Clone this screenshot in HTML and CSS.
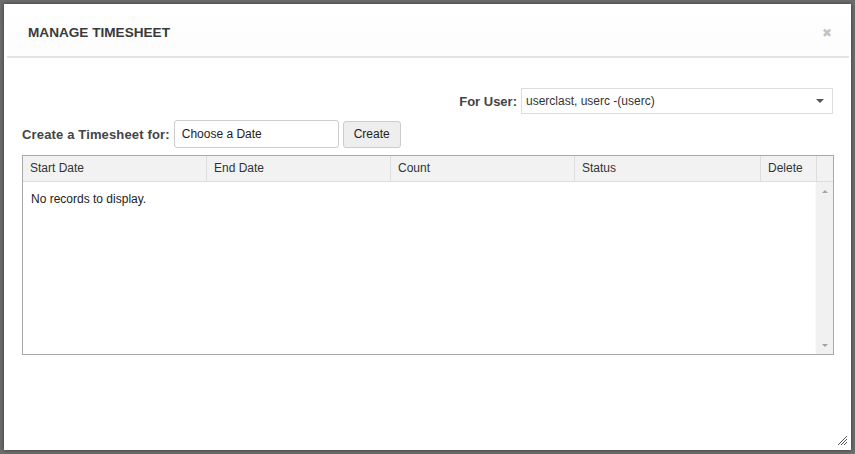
FILE: index.html
```html
<!DOCTYPE html>
<html>
<head>
    <title>Manage Timesheet</title>
    <link rel="stylesheet" href="styles.css">
</head>
<body>
    <!-- the dialog window -->
    <div class="dialog">
        <div class="dialog-header">
            <span class="dialog-title">MANAGE TIMESHEET</span>
            <span class="dialog-close">&#x2716;</span>
        </div>

        <div class="dialog-body">
            <div class="user-row">
                <label class="field-label">For User:</label>
                <div class="select">
                    <span>userclast, userc -(userc)</span>
                    <span class="select-arrow"></span>
                </div>
            </div>

            <div class="create-row">
                <label class="field-label create-label">Create a Timesheet for:</label>
                <div class="date-input">Choose a Date</div>
                <button class="btn">Create</button>
            </div>

            <!-- the timesheet grid -->
            <div class="grid">
                <div class="grid-head">
                    <div class="col col-wide">Start Date</div>
                    <div class="col col-wide">End Date</div>
                    <div class="col col-wide">Count</div>
                    <div class="col col-status">Status</div>
                    <div class="col col-del">Delete</div>
                    <div class="col col-gap"></div>
                </div>
                <div class="grid-body">
                    <div class="grid-empty">No records to display.</div>
                    <div class="scrollbar">
                        <span class="arrow-up"></span>
                        <span class="arrow-down"></span>
                    </div>
                </div>
            </div>
        </div>

        <svg class="resize" width="11" height="11" viewBox="0 0 11 11">
            <path d="M1 10 L10 1 M4 10 L10 4 M7 10 L10 7" stroke="#555" stroke-width="1" fill="none"/>
        </svg>
    </div>
</body>
</html>
```

FILE: styles.css
```css
/* page behind the dialog */
body {
    margin: 0;
    padding: 4px;
    background: #6d6d6d;
    font-family: "Liberation Sans", Arial, sans-serif;
    font-size: 12px;
    color: #333;
}

/* the dialog box */
.dialog {
    position: relative;
    box-sizing: border-box;
    width: 847px;
    height: 446px;
    background: #fff;
    box-shadow: 0 0 4px rgba(0, 0, 0, 0.5);
}

.dialog-header {
    display: flex;
    justify-content: space-between;
    align-items: center;
    height: 52px;
    margin: 0 2px 0 3px;
    padding: 0 17px 0 21px;
    border-bottom: 2px solid #e3e3e3;
    background: linear-gradient(#fff, #fcfcfc);
}

.dialog-title {
    font-size: 13.6px;
    font-weight: bold;
    color: #3a3a3a;
    padding-top: 4px;
}

.dialog-close {
    font-size: 12px;
    color: #c4c4c4;
    padding-top: 6px;
}

.dialog-body {
    padding: 30px 17px 0 18px;
}

.field-label {
    font-size: 13px;
    font-weight: bold;
    color: #444;
}

/* user picker */
.user-row {
    display: flex;
    justify-content: flex-end;
    align-items: center;
    gap: 4px;
}

.select {
    display: flex;
    justify-content: space-between;
    align-items: center;
    box-sizing: border-box;
    width: 312px;
    height: 26px;
    margin-right: 1px;
    padding: 0 8px 0 4px;
    border: 1px solid #ddd;
    font-size: 12px;
}

.select-arrow {
    width: 0;
    height: 0;
    border-left: 4px solid transparent;
    border-right: 4px solid transparent;
    border-top: 4px solid #555;
}

/* create row */
.create-row {
    display: flex;
    align-items: center;
    gap: 4px;
    margin-top: 6px;
}

.create-label {
    letter-spacing: 0.15px;
}

.date-input {
    box-sizing: border-box;
    width: 165px;
    height: 28px;
    line-height: 26px;
    padding: 0 7px;
    border: 1px solid #ccc;
    border-radius: 3px;
    font-size: 12px;
    color: #222;
}

.btn {
    box-sizing: border-box;
    width: 58px;
    height: 27px;
    padding: 0;
    border: 1px solid #ccc;
    border-radius: 3px;
    background: #eee;
    font-family: inherit;
    font-size: 12px;
    color: #222;
}

/* grid */
.grid {
    box-sizing: border-box;
    height: 200px;
    margin-top: 7px;
    border: 1px solid #a8a8a8;
    display: flex;
    flex-direction: column;
}

.grid-head {
    display: flex;
    height: 25px;
    background: #f2f2f2;
    border-bottom: 1px solid #ddd;
}

.col {
    box-sizing: border-box;
    line-height: 25px;
    padding-left: 7px;
    border-right: 1px solid #ddd;
}

.col-wide {
    width: 184px;
}

.col-status {
    width: 186px;
}

.col-del {
    width: 56px;
}

.col-gap {
    flex: 1;
    border-right: none;
}

.grid-body {
    flex: 1;
    display: flex;
    justify-content: space-between;
}

.grid-empty {
    padding: 10px 8px;
    color: #222;
}

.scrollbar {
    width: 17px;
    background: #f1f1f1;
    border-left: 1px solid #fafafa;
    display: flex;
    flex-direction: column;
    justify-content: space-between;
    align-items: center;
    padding: 8px 0 7px;
}

.arrow-up {
    border-left: 3px solid transparent;
    border-right: 3px solid transparent;
    border-bottom: 3px solid #a3a3a3;
}

.arrow-down {
    border-left: 3px solid transparent;
    border-right: 3px solid transparent;
    border-top: 3px solid #a3a3a3;
}

.resize {
    position: absolute;
    right: 3px;
    bottom: 4px;
}
```
